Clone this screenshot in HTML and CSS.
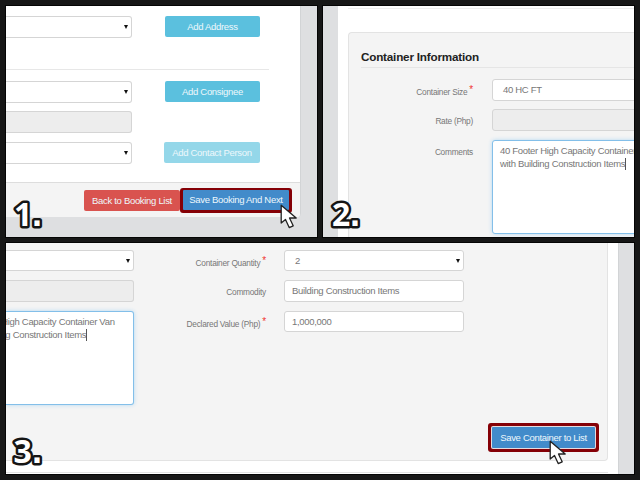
FILE: index.html
```html
<!DOCTYPE html>
<html lang="en">
<head>
<meta charset="utf-8">
<title>Booking steps</title>
<link rel="stylesheet" href="styles.css">
</head>
<body>
<main class="steps">
  <section class="panel booking">
    <div class="card">
      <div class="booking-form">
        <div class="booking-row address"><div class="field select open-left"></div><span class="btn info">Add Address</span></div>
        <hr class="rule">
        <div class="booking-row"><div class="field select open-left"></div><span class="btn info">Add Consignee</span></div>
        <div class="booking-row rate"><div class="field disabled open-left"></div></div>
        <div class="booking-row"><div class="field select open-left"></div><span class="btn info faded">Add Contact Person</span></div>
      </div>
      <footer class="card-footer"><span class="btn danger">Back to Booking List</span><span class="highlight"><span class="btn primary">Save Booking And Next</span></span></footer>
    </div>
    <svg class="cursor" viewBox="0 0 18 25"><path d="M1.2 1.2V19L5.5 15.4L9.2 23.6L13.2 21.8L9.5 14H16.2Z"/></svg>
    <svg class="number" viewBox="0 0 40 34"><text x="4" y="28.5">1</text><text class="dot" x="22" y="28.5">.</text></svg>
  </section>

  <section class="panel container-info">
    <div class="sheet">
      <div class="well">
        <h2>Container Information</h2>
        <div class="info-row"><label class="required">Container Size <b>*</b></label><div class="field roomy">40 HC FT</div></div>
        <div class="info-row rate"><label>Rate (Php)</label><div class="field disabled"></div></div>
        <div class="info-row"><label>Comments</label><div class="field area">40 Footer High Capacity Container Van<br>with Building Construction Items<i class="caret"></i></div></div>
      </div>
    </div>
    <svg class="number" viewBox="0 0 40 34"><text x="5" y="28.5">2</text><text class="dot" x="23" y="28.5">.</text></svg>
  </section>

  <section class="panel container-save">
    <div class="sheet">
      <div class="well">
        <div class="columns">
          <div class="stack">
            <div class="field select open-left short"></div>
            <div class="field disabled open-left"></div>
            <div class="field area open-left"><span class="clipped">40 Footer High Capacity Container Van<br>with Building Construction Items<i class="caret"></i></span></div>
          </div>
          <div class="stack">
            <div class="qty-row"><label class="required">Container Quantity <b>*</b></label><div class="field select roomy short">2</div></div>
            <div class="qty-row"><label>Commodity</label><div class="field">Building Construction Items</div></div>
            <div class="qty-row"><label class="required">Declared Value (Php) <b>*</b></label><div class="field short">1,000,000</div></div>
          </div>
        </div>
        <span class="highlight wide"><span class="btn primary">Save Container to List</span></span>
      </div>
    </div>
    <svg class="cursor" viewBox="0 0 18 25"><path d="M1.2 1.2V19L5.5 15.4L9.2 23.6L13.2 21.8L9.5 14H16.2Z"/></svg>
    <svg class="number" viewBox="0 0 40 34"><text x="3.5" y="28.5">3</text><text class="dot" x="22" y="28.5">.</text></svg>
  </section>
</main>
</body>
</html>
```
FILE: styles.css
```css
* { box-sizing: border-box; }
body {
  margin: 0;
  font: 9.5px/12px "Liberation Sans", sans-serif;
  letter-spacing: -.31px;
  color: #777;
}
.steps {
  width: 640px;
  height: 480px;
  padding: 6px;
  background: #171717;
  display: grid;
  grid-template: 231px 231px / 311px 311px;
  gap: 6px;
}
.panel {
  position: relative;
  overflow: hidden;
  background: #dedfe1;
  box-shadow: 0 0 0 1px #050505;
}
.container-save { grid-column: span 2; }

.field {
  height: 22px;
  padding: 4px 7px;
  border: 1px solid #d5d5d5;
  border-radius: 3px;
  background: #fff;
  white-space: nowrap;
  overflow: hidden;
}
.short { height: 21px; }
.open-left { border-left: 0; border-radius: 0 3px 3px 0; }
.roomy { padding-left: 10px; }
.disabled { background: #ededed; }
.select {
  display: flex;
  justify-content: space-between;
  align-items: center;
}
.select::after {
  content: "";
  margin-left: auto;
  margin-right: -4px;
  border: 2.5px solid transparent;
  border-top: 4px solid #111;
  border-bottom: 0;
}
.area {
  height: 94px;
  line-height: 12.5px;
  border-color: #83bfe9;
  box-shadow: 0 0 4px #b4d9f2;
}
.caret {
  display: inline-block;
  width: 1px;
  height: 12px;
  background: #555;
  vertical-align: -3px;
}

.btn {
  display: block;
  height: 21px;
  border-radius: 2px;
  color: #eef8fc;
  line-height: 21px;
  text-align: center;
  white-space: nowrap;
}
.info { width: 95px; background: #5bc0de; }
.faded { width: 96px; background: #94d7e9; }
.danger { width: 96px; background: #d9534f; }
.primary { height: 20px; line-height: 20px; background: #428bca; border-radius: 1px; }
.highlight {
  width: 112px;
  padding: 2px 3px 3px;
  border-radius: 3px;
  background: #850006;
}

.card {
  width: 295px;
  height: 211px;
  display: flex;
  flex-direction: column;
  background: #fff;
  border-right: 1px solid #d2d4d6;
  border-radius: 0 0 4px 0;
  overflow: hidden;
}
.booking-form { flex: 1; padding-top: 10px; }
.booking-row {
  display: flex;
  justify-content: space-between;
  margin-bottom: 8px;
}
.booking-row .field { width: 126px; }
.booking-row .btn { margin-right: 40px; }
.booking-row.address { margin-bottom: 31px; }
.rule {
  width: 263px;
  margin: 0 0 11px;
  border: 0;
  border-top: 1px solid #e7e7e7;
}
.card-footer {
  height: 35px;
  padding: 0 8px 0 0;
  display: flex;
  justify-content: flex-end;
  align-items: center;
  background: #f4f4f4;
  border-top: 1px solid #ddd;
}

.sheet { background: #fff; height: 100%; }
label {
  padding-top: 6px;
  font-size: 8.3px;
  letter-spacing: -.25px;
  line-height: 12px;
  text-align: right;
  white-space: nowrap;
}
label.required { padding-top: 7px; }
label b { color: #f0352f; font-size: 10px; font-weight: 400; vertical-align: 2px; line-height: 8px; }

.container-info .sheet { margin-left: 15px; padding: 2px 0 0 10px; }
.container-info .sheet::before {
  content: "";
  display: block;
  border-top: 1px solid #eee;
  margin-bottom: 23px;
}
.container-info .well {
  height: 230px;
  padding: 16px 0 0 12px;
  border: 1px solid #e3e3e3;
  border-right: 0;
  border-radius: 4px 0 0 0;
  background: #f4f4f4;
}
h2 {
  margin: 0 0 11px;
  padding-bottom: 3px;
  border-bottom: 1px solid #e5e5e5;
  font: bold 11.7px/15px "Liberation Sans", sans-serif;
  letter-spacing: -.2px;
  color: #222;
}
.info-row {
  display: grid;
  grid-template-columns: 112px 180px;
  column-gap: 19px;
  margin-bottom: 8px;
}
.booking-row.rate, .info-row.rate { margin-bottom: 9px; }

.container-save .sheet { width: 613px; border-right: 1px solid #d2d4d6; }
.container-save .well {
  width: 602px;
  height: 218px;
  padding: 7px 8px 0 0;
  background: #f4f4f4;
  border: 1px solid #e3e3e3;
  border-width: 0 1px 1px 0;
  border-radius: 0 0 4px 0;
}
.container-save .sheet::after {
  content: "";
  display: block;
  width: 602px;
  margin-top: 11px;
  border-top: 1px solid #e3e3e3;
}
.columns { display: grid; grid-template-columns: 128px 330px; }
.stack { display: flex; flex-direction: column; gap: 9px; }
.clipped { display: block; margin-left: -52px; }
.qty-row {
  display: grid;
  grid-template-columns: 132px 180px;
  column-gap: 18px;
  align-items: start;
}
.qty-row:not(:nth-child(2)) { height: 21px; }
.wide { display: block; width: 111px; margin: 18px 0 0 auto; padding: 4px; }
.wide .btn { height: 21px; line-height: 21px; box-shadow: 0 0 0 1px #e4dce0; }

.cursor {
  position: absolute;
  width: 18px;
  height: 25px;
  left: 274px;
  top: 198px;
}
.container-save .cursor { left: 543px; top: 197px; }
.cursor path { fill: #fff; stroke: #222; stroke-width: 1.3; stroke-linejoin: round; }
.number {
  position: absolute;
  left: 4px;
  bottom: 6px;
  width: 40px;
  height: 34px;
  overflow: visible;
}
.number text {
  font: bold 32px "Open Sans", sans-serif;
  letter-spacing: 0;
  fill: #fff;
  stroke: #151515;
  stroke-width: 5px;
  stroke-linejoin: round;
  paint-order: stroke fill;
}
.number .dot { font-family: "Liberation Sans", sans-serif; font-size: 36px; }
```
